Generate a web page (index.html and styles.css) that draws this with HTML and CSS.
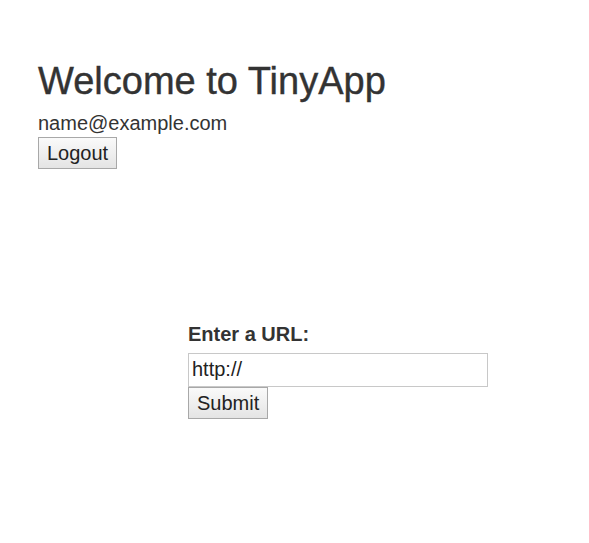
FILE: index.html
```html
<!DOCTYPE html>
<html lang="en">
<head>
<meta charset="utf-8">
<title>TinyApp</title>
<link rel="stylesheet" href="styles.css">
</head>
<body>
  <header class="header">
    <h1 class="title">Welcome to TinyApp</h1>
    <div class="user">name@example.com</div>
    <form class="logout-form">
      <button type="button" class="btn">Logout</button>
    </form>
  </header>
  <main class="main">
    <form class="url-form">
      <label class="label" for="longURL">Enter a URL:</label>
      <input class="input" id="longURL" type="text" value="http://">
      <button type="button" class="btn">Submit</button>
    </form>
  </main>
</body>
</html>
```

FILE: styles.css
```css
html, body {
  margin: 0;
  padding: 0;
  background: #ffffff;
}
body {
  font-family: "Liberation Sans", Arial, Helvetica, sans-serif;
  font-size: 20px;
  line-height: 1.428571;
  color: #333333;
  padding: 61px 38px 0 38px;
}
.title {
  font-size: 38px;
  font-weight: 500;
  line-height: 1.1;
  margin: 0 0 6px 0;
  -webkit-text-stroke: 0.4px #333333;
}
.user {
  line-height: 28px;
}
.logout-form, .url-form {
  margin: 0;
}
.btn {
  font-family: "Liberation Sans", Arial, Helvetica, sans-serif;
  font-size: 20px;
  line-height: 24px;
  color: #222222;
  padding: 3px 8px;
  margin: 0;
  border: 1px solid #a8a8a8;
  border-radius: 0;
  background: linear-gradient(#fafafa, #e4e4e4);
  display: block;
}
.main {
  margin-top: 153px;
  padding-left: 150px;
}
.url-form {
  display: flex;
  flex-direction: column;
  align-items: flex-start;
}
.label {
  font-weight: bold;
  line-height: 24px;
  margin-bottom: 7px;
}
.input {
  box-sizing: border-box;
  width: 300px;
  height: 34px;
  margin: 0;
  padding: 0 3px;
  border: 1px solid #c8c8c8;
  font-family: "Liberation Sans", Arial, Helvetica, sans-serif;
  font-size: 20px;
  color: #222222;
  outline: none;
}
```
